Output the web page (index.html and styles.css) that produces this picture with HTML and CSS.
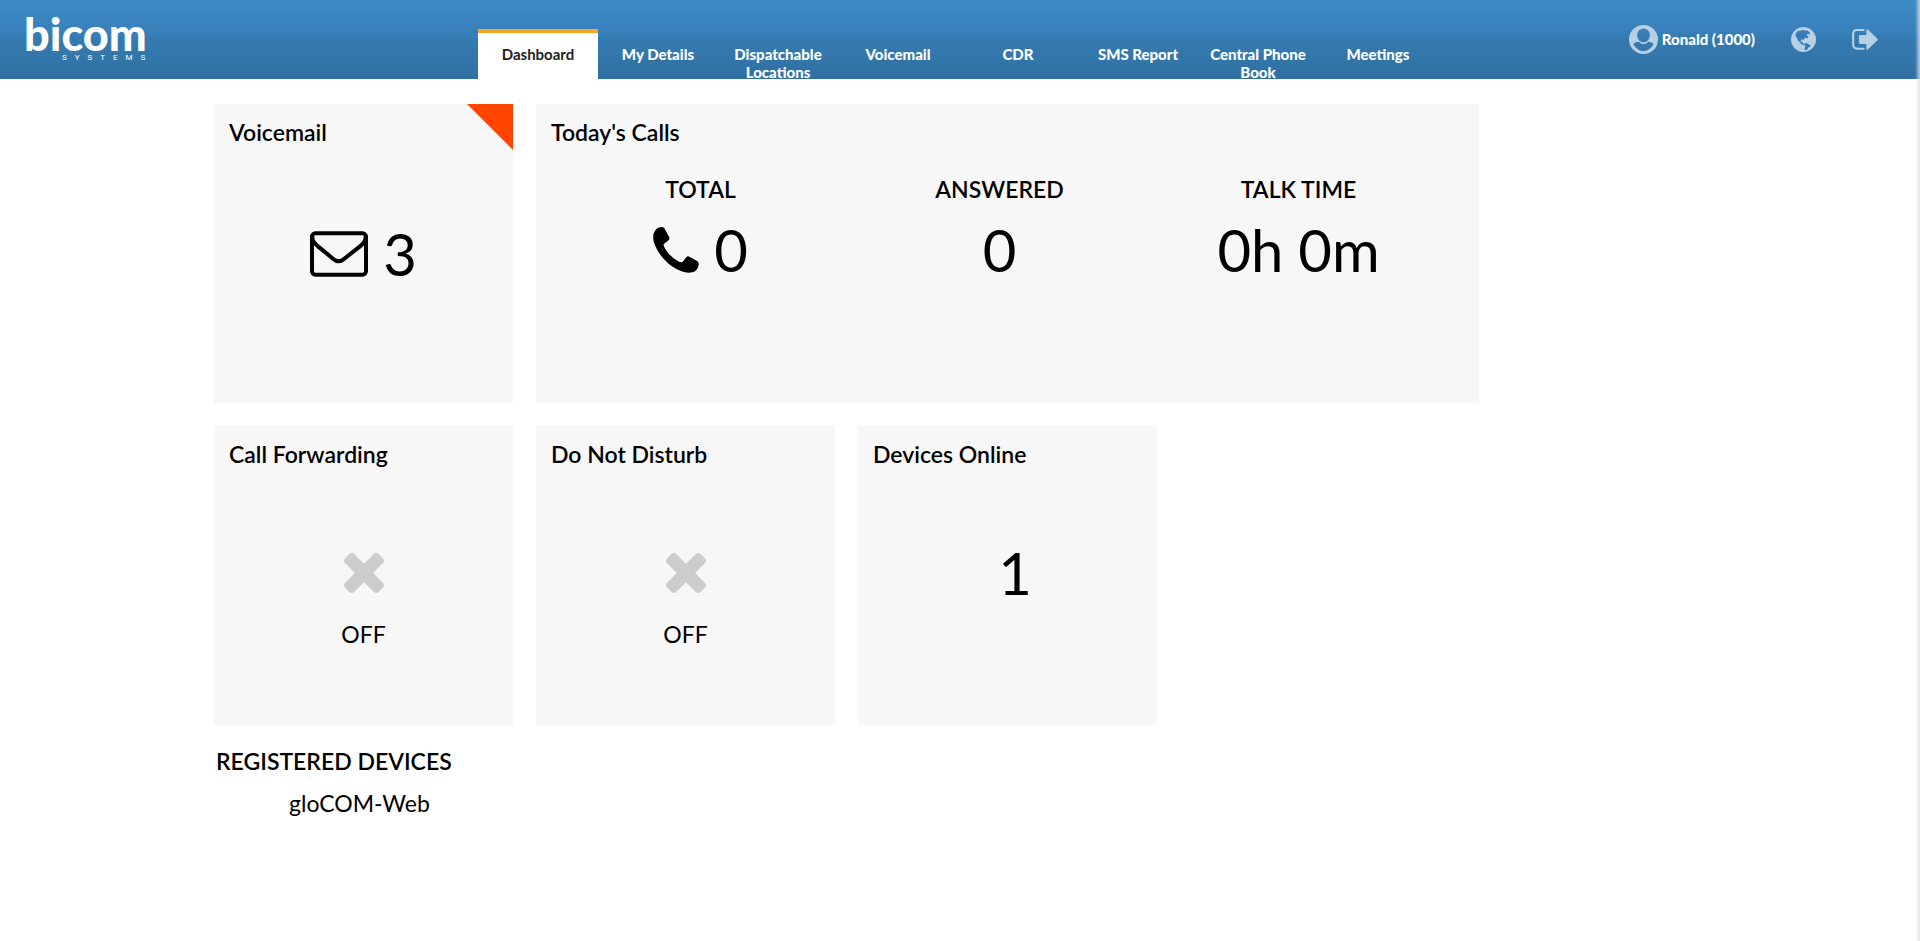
FILE: index.html
```html
<!DOCTYPE html>
<html lang="en">
<head>
<meta charset="utf-8">
<title>Dashboard</title>
<link rel="stylesheet" href="styles.css">
</head>
<body>
<header class="topbar">
  <a class="logo" href="#">
    <span class="logo-name">bicom</span>
    <span class="logo-sub">SYSTEMS</span>
  </a>
  <nav class="tabs">
    <a class="tab active" href="#">Dashboard</a>
    <a class="tab" href="#">My Details</a>
    <a class="tab" href="#">Dispatchable Locations</a>
    <a class="tab" href="#">Voicemail</a>
    <a class="tab" href="#">CDR</a>
    <a class="tab" href="#">SMS Report</a>
    <a class="tab" href="#">Central Phone Book</a>
    <a class="tab" href="#">Meetings</a>
  </nav>
  <div class="account">
    <a class="user" href="#">
      <svg class="user-icon" viewBox="0 0 87 87" aria-hidden="true"><path fill-rule="evenodd" d="M43.500 0a43.500 43.500 0 1 0 0 87a43.500 43.500 0 1 0 0-87zM43.500 11c12 0 19 8 19 19c0 12-8 22-19 22s-19-10-19-22c0-11 7-19 19-19zM13 57c4-5 10-7 17-7c4 5 8 7 13.500 7s10-2 13.500-7c7 0 13 2 17 7c-7 13-18 21-30.500 21s-24-8-30.500-21z"/></svg>
      <span>Ronald (1000)</span>
    </a>
    <button class="icon-button" type="button" aria-label="Language">
      <svg class="globe-icon" viewBox="0 0 74 74" aria-hidden="true"><circle cx="37" cy="37" r="37"/><path class="land" d="M14 20l6-8 8-1 6-3 8 3 6-1 8 6-1 6-6-2-3 4 5 4-2 5-7-1-5 6-7 0-2 4 5 2 3 5 5 3-3 2-8-4-5-6-5-4-3-9-4-5zM40 49l6-2 6 4 6 3-1 5-6 2-3 6-5 2-3-4 2-7z"/></svg>
    </button>
    <button class="icon-button" type="button" aria-label="Sign out">
      <svg class="exit-icon" viewBox="0 0 76 62" aria-hidden="true"><path class="bracket" d="M34 3H15Q3 3 3 15V46Q3 58 15 58H34"/><path d="M20 22Q20 18 24 18H42V4Q42-1 47 2L74 28Q77 31 74 34L47 60Q42 63 42 58V44H24Q20 44 20 40z"/></svg>
    </button>
  </div>
</header>

<main class="dashboard">
  <section class="cards">
    <article class="card has-alert">
      <h2 class="card-title">Voicemail</h2>
      <div class="card-body">
        <svg class="mail-icon" viewBox="0 0 174 138" aria-hidden="true"><rect x="6" y="7" width="162" height="124" rx="10"/><path d="M7 13Q5 32 24 46L69 83Q86 98 103 83L150 46Q169 32 167 13"/></svg>
        <span class="figure">3</span>
      </div>
    </article>
    <article class="card wide">
      <h2 class="card-title">Today's Calls</h2>
      <div class="stats">
        <div class="stat">
          <h3 class="stat-label">TOTAL</h3>
          <div class="stat-value"><svg class="phone-icon" viewBox="0 0 137 138" aria-hidden="true"><path d="M15 2Q28-2 33 3L49 32Q50 37 46 40L31 52Q32 62 44 77Q58 94 74 102Q82 107 88 105L100 90Q104 86 110 90L133 103Q138 107 136 116Q132 131 118 136Q102 140 85 133Q55 123 30 94Q8 68 1 41Q-2 22 5 12Q9 5 15 2Z"/></svg><span class="figure">0</span></div>
        </div>
        <div class="stat">
          <h3 class="stat-label">ANSWERED</h3>
          <div class="stat-value"><span class="figure">0</span></div>
        </div>
        <div class="stat">
          <h3 class="stat-label">TALK TIME</h3>
          <div class="stat-value"><span class="figure">0h 0m</span></div>
        </div>
      </div>
    </article>
    <article class="card">
      <h2 class="card-title">Call Forwarding</h2>
      <div class="card-body">
        <svg class="off-icon" viewBox="302 366 1188 1188" aria-hidden="true"><path d="M1490 1322q0 40-28 68l-136 136q-28 28-68 28t-68-28l-294-294-294 294q-28 28-68 28t-68-28l-136-136q-28-28-28-68t28-68l294-294-294-294q-28-28-28-68t28-68l136-136q28-28 68-28t68 28l294 294 294-294q28-28 68-28t68 28l136 136q28 28 28 68t-28 68l-294 294 294 294q28 28 28 68z"/></svg>
      </div>
      <p class="card-state">OFF</p>
    </article>
    <article class="card">
      <h2 class="card-title">Do Not Disturb</h2>
      <div class="card-body">
        <svg class="off-icon" viewBox="302 366 1188 1188" aria-hidden="true"><path d="M1490 1322q0 40-28 68l-136 136q-28 28-68 28t-68-28l-294-294-294 294q-28 28-68 28t-68-28l-136-136q-28-28-28-68t28-68l294-294-294-294q-28-28-28-68t28-68l136-136q28-28 68-28t68 28l294 294 294-294q28-28 68-28t68 28l136 136q28 28 28 68t-28 68l-294 294 294 294q28 28 28 68z"/></svg>
      </div>
      <p class="card-state">OFF</p>
    </article>
    <article class="card">
      <h2 class="card-title">Devices Online</h2>
      <div class="card-body"><span class="card-icon"></span><span class="figure">1</span></div>
    </article>
  </section>
  <section class="devices">
    <h2 class="devices-title">REGISTERED DEVICES</h2>
    <ul class="device-list">
      <li>gloCOM-Web</li>
    </ul>
  </section>
</main>
</body>
</html>
```
FILE: styles.css
```css
* {
  box-sizing: border-box;
}

body {
  margin: 0;
  min-height: 100vh;
  background: #fff;
  color: #000;
  font-family: Lato, "Liberation Sans", sans-serif;
  font-size: 23px;
  line-height: 32px;
}

body::after {
  content: "";
  position: fixed;
  top: 0;
  right: 0;
  bottom: 0;
  width: 5px;
  background: linear-gradient(to right, rgba(225, 225, 230, 0), rgba(225, 225, 230, 0.8));
}

h2,
h3,
p,
ul {
  margin: 0;
  padding: 0;
}

a {
  color: inherit;
  text-decoration: none;
}

.topbar {
  display: flex;
  height: 79px;
  overflow: hidden;
  background: linear-gradient(#3d8bc6, #3880bb 40%, #357bb0 50%, #3070a3);
  color: #fff;
}

.logo {
  flex: 0 0 478px;
  padding: 14px 0 0 24px;
}

.logo-name {
  display: block;
  font-size: 45px;
  font-weight: 900;
  line-height: 40px;
}

.logo-sub {
  display: block;
  padding-left: 38px;
  font-family: Roboto, sans-serif;
  font-size: 8px;
  line-height: 8px;
  letter-spacing: 8px;
}

.tabs {
  display: flex;
  padding-top: 29px;
}

.tab {
  width: 120px;
  padding: 12px 10px 0;
  border-top: 4px solid transparent;
  font-size: 15px;
  font-weight: 900;
  line-height: 18px;
  text-align: center;
}

.tab.active {
  border-color: #f8a51f;
  background: #fff;
  color: #222;
  font-weight: 700;
}

.account {
  display: flex;
  align-items: center;
  height: 78px;
  margin-left: auto;
  padding-right: 42px;
  gap: 36px;
  font-size: 15px;
  font-weight: 900;
  line-height: 18px;
}

.account svg {
  display: block;
  fill: #b7d0e4;
}

.user {
  display: flex;
  align-items: center;
  gap: 4px;
}

.icon-button {
  padding: 0;
  border: 0;
  background: none;
}

.user-icon {
  width: 29px;
  height: 29px;
}

.globe-icon {
  width: 25px;
  height: 25px;
}

.globe-icon .land {
  fill: #377db6;
}

.exit-icon {
  width: 26px;
  height: 21px;
}

.exit-icon .bracket {
  fill: none;
  stroke: #b7d0e4;
  stroke-width: 6;
  stroke-linecap: round;
}

.dashboard {
  padding: 25px 214px;
}

.cards {
  display: grid;
  grid-template-columns: repeat(4, 299px);
  grid-auto-rows: 299px;
  gap: 23px;
}

.card {
  position: relative;
  padding: 12px 15px;
  background: #f7f7f7;
}

.wide {
  grid-column: span 3;
}

.has-alert::after {
  content: "";
  position: absolute;
  top: 0;
  right: 0;
  width: 46px;
  height: 46px;
  background: #ff4500;
  clip-path: polygon(0 0, 100% 0, 100% 100%);
}

.card-title,
.stat-label,
.devices-title {
  font-size: 23px;
  font-weight: 600;
  line-height: 32px;
}

.card-body {
  display: flex;
  align-items: center;
  justify-content: center;
  gap: 15px;
  height: 72px;
  margin-top: 67px;
}

.has-alert .card-body {
  margin-top: 70px;
}

.figure {
  font-size: 58px;
  line-height: 72px;
}

.mail-icon {
  width: 58px;
  height: 46px;
  fill: none;
  stroke: #000;
  stroke-width: 12;
}

.phone-icon {
  width: 46px;
  height: 46px;
}

.off-icon {
  width: 40px;
  height: 40px;
  fill: #cdcbcc;
}

.card-state {
  margin-top: 9px;
  text-align: center;
}

.stats {
  display: grid;
  grid-template-columns: repeat(3, 299px);
  margin-top: 25px;
}

.stat {
  text-align: center;
}

.stat-value {
  display: flex;
  align-items: center;
  justify-content: center;
  gap: 15px;
  margin-top: 9px;
}

.devices {
  padding: 20px 2px;
}

.device-list {
  margin-top: 10px;
  padding-left: 73px;
  list-style: none;
}
```
